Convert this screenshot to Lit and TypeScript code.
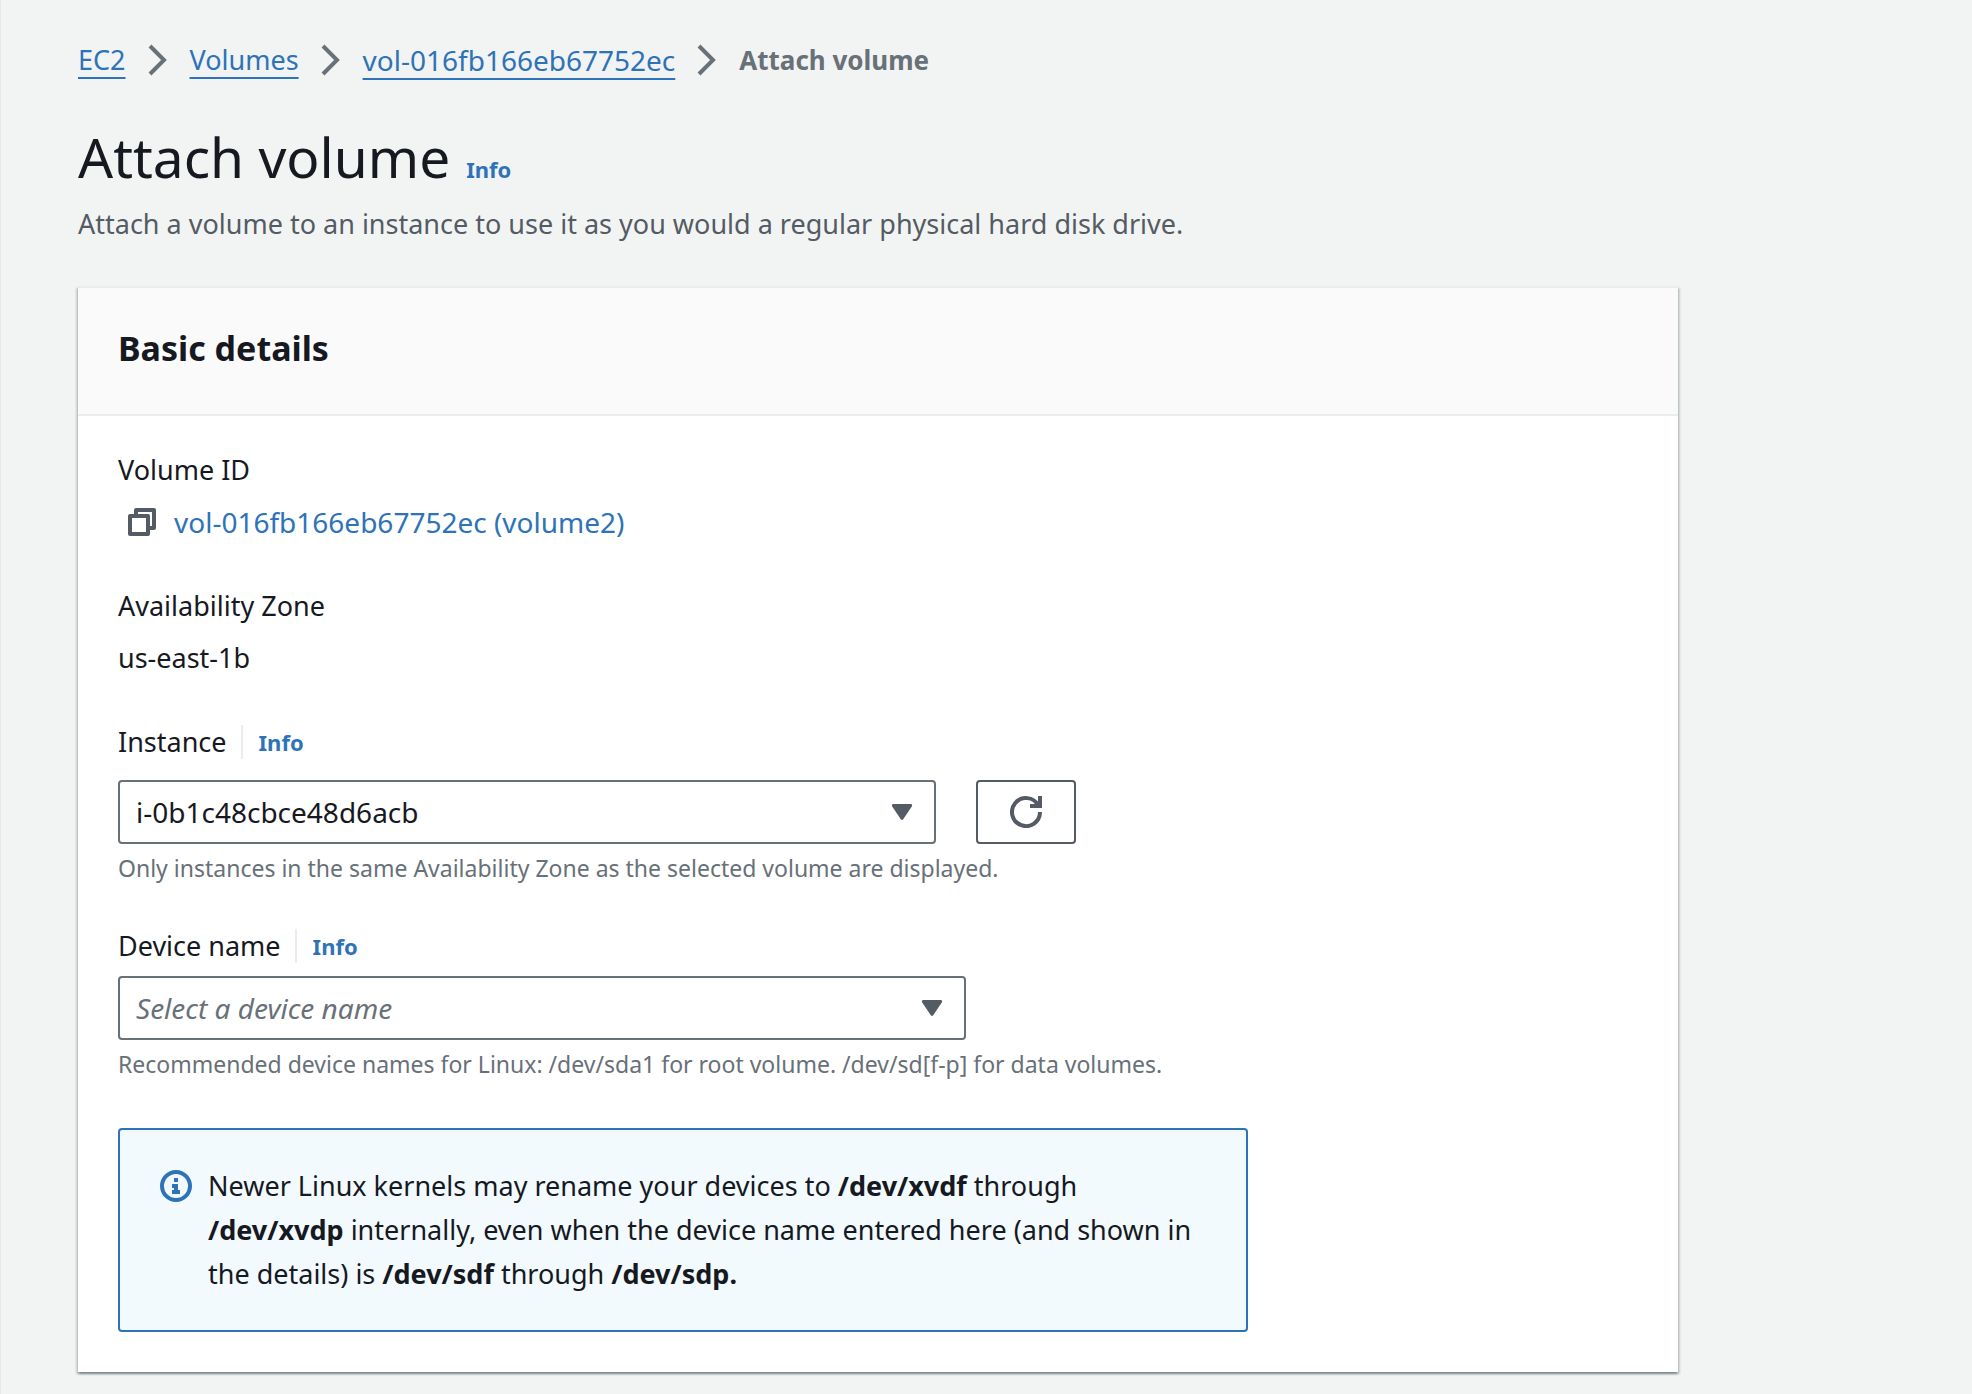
import { LitElement, html, css, svg, nothing } from "lit";
import { customElement, property } from "lit/decorators.js";

const icons = {
  chevron: svg`<path d="M4 1l7 7-7 7" />`,
  copy: svg`<g stroke-linejoin="round"><path d="M2 5h9v9H2z" /><path d="M5 5V2h9v9h-3" /></g>`,
  refresh: svg`<path d="M15 8a7 7 0 1 1-.9-3.4" /><path d="M10 5h5V0" />`,
  info: svg`<circle cx="8" cy="8" r="7" /><path class="solid" d="M7 4h2v2H7zM6 7h3v3h1v2H6v-2h1V9H6z" />`,
  caret: svg`<path class="solid" d="M3.6 4h8.8q1 .1.5 1.2L8.6 11.6q-.6.7-1.2 0L3.1 5.2Q2.6 4.1 3.6 4z" />`,
};

@customElement("ui-icon")
class UiIcon extends LitElement {
  @property() name: keyof typeof icons = "info";

  static styles = css`
    :host {
      display: block;
      flex: none;
      width: 32px;
      height: 32px;
    }
    .icon {
      display: block;
      width: 100%;
      height: 100%;
      fill: none;
      stroke: currentColor;
      stroke-width: 2;
    }
    .solid {
      fill: currentColor;
      stroke: none;
    }
  `;

  render() {
    return html`<svg class="icon" viewBox="0 0 16 16" aria-hidden="true">${icons[this.name]}</svg>`;
  }
}

interface SelectField {
  id: string;
  label: string;
  option: string;
  empty?: boolean;
  help: string;
  refreshable?: boolean;
}

const fields: SelectField[] = [
  {
    id: "instance",
    label: "Instance",
    option: "i-0b1c48cbce48d6acb",
    help: "Only instances in the same Availability Zone as the selected volume are displayed.",
    refreshable: true,
  },
  {
    id: "device",
    label: "Device name",
    option: "Select a device name",
    empty: true,
    help: "Recommended device names for Linux: /dev/sda1 for root volume. /dev/sd[f-p] for data volumes.",
  },
];

@customElement("app-root")
class AppRoot extends LitElement {
  static styles = css`
    :host {
      display: block;
      font-family: "Noto Sans", "Open Sans", sans-serif;
      font-size: 27px;
      line-height: 44px;
      color: #16191f;
    }
    * {
      box-sizing: border-box;
    }
    a {
      color: #2e73b8;
      text-decoration: none;
    }
    h1,
    h2,
    p,
    dl,
    dd,
    ol {
      margin: 0;
      padding: 0;
    }
    .page {
      min-height: 100vh;
      padding: 40px 77px 20px;
      background: #f2f4f3;
      border-left: 1px solid #e6e9e9;
    }
    .crumbs {
      display: flex;
      flex-wrap: wrap;
      line-height: 40px;
      list-style: none;
      margin-bottom: 40px;
    }
    .crumb {
      display: flex;
      align-items: center;
    }
    .crumb ui-icon {
      margin: 0 16px;
      color: #687078;
    }
    .crumb a {
      text-decoration: underline;
      text-decoration-thickness: 2px;
      text-underline-offset: 7px;
      text-decoration-skip-ink: none;
    }
    .current {
      font-size: 26px;
      font-weight: 700;
      color: #687078;
    }
    .id {
      font-size: 28px;
    }
    .title {
      display: flex;
      align-items: baseline;
      gap: 16px;
    }
    h1 {
      font-size: 55px;
      font-weight: 400;
      line-height: 74px;
    }
    .info {
      font-size: 22px;
      font-weight: 700;
      line-height: 34px;
    }
    .lead {
      margin: 10px 0 42px;
      line-height: 40px;
      color: #545b64;
    }
    .card {
      max-width: 1600px;
      background: #fff;
      border-top: 2px solid #eaeded;
      box-shadow:
        0 2px 2px rgba(0, 28, 36, 0.3),
        2px 2px 2px rgba(0, 28, 36, 0.15),
        -2px 2px 2px rgba(0, 28, 36, 0.15);
    }
    .head {
      padding: 38px 40px 44px;
      background: #fafafa;
      border-bottom: 2px solid #eaeded;
    }
    h2 {
      font-size: 34px;
      font-weight: 700;
    }
    .body {
      display: flex;
      flex-direction: column;
      gap: 40px;
      padding: 32px 40px 40px;
    }
    .details {
      display: flex;
      flex-direction: column;
      gap: 40px;
    }
    .detail {
      display: flex;
      flex-direction: column;
      gap: 8px;
    }
    .value {
      display: flex;
      align-items: center;
      gap: 8px;
    }
    button {
      display: flex;
      align-items: center;
      justify-content: center;
      color: #545b64;
      cursor: pointer;
    }
    .copy {
      padding: 0 8px;
      background: none;
      border: 0;
    }
    .label {
      display: flex;
      align-items: center;
      gap: 14px;
      margin-bottom: 8px;
    }
    .label.spaced {
      margin-bottom: 16px;
    }
    .label .info {
      padding-left: 16px;
      border-left: 2px solid #eaeded;
    }
    .controls {
      display: flex;
      gap: 40px;
    }
    .box {
      display: grid;
      align-items: center;
      flex: 1;
      max-width: 848px;
    }
    .box.narrow {
      max-width: 818px;
    }
    .box > * {
      grid-area: 1 / 1;
    }
    .box ui-icon {
      justify-self: end;
      margin-right: 18px;
      color: #545b64;
      pointer-events: none;
    }
    select {
      appearance: none;
      width: 100%;
      height: 64px;
      padding: 0 60px 0 16px;
      border: 2px solid #687078;
      border-radius: 4px;
      background: #fff;
      font: inherit;
      font-size: 28px;
      color: inherit;
    }
    select.empty {
      font-style: italic;
      color: #687078;
    }
    .refresh {
      width: 100px;
      height: 64px;
      padding: 0;
      border: 2px solid #545b64;
      border-radius: 4px;
      background: #fff;
    }
    .help {
      margin-top: 8px;
      font-size: 23px;
      line-height: 32px;
      color: #687078;
    }
    .alert {
      display: flex;
      gap: 16px;
      max-width: 1130px;
      margin-top: 8px;
      padding: 34px 40px;
      border: 2px solid #2e73b8;
      border-radius: 4px;
      background: #f2fafe;
    }
    .alert ui-icon {
      margin-top: 6px;
      color: #2e73b8;
    }
  `;

  private field(f: SelectField) {
    return html`
      <div>
        <div class="label ${f.refreshable ? "spaced" : ""}">
          <label for=${f.id}>${f.label}</label>
          <a class="info" href="#${f.id}-info">Info</a>
        </div>
        <div class="controls">
          <div class="box ${f.refreshable ? "narrow" : ""}">
            <select id=${f.id} class=${f.empty ? "empty" : ""} aria-describedby="${f.id}-help">
              <option>${f.option}</option>
            </select>
            <ui-icon name="caret"></ui-icon>
          </div>
          ${f.refreshable
            ? html`<button class="refresh" type="button" aria-label="Refresh"><ui-icon name="refresh"></ui-icon></button>`
            : nothing}
        </div>
        <p class="help" id="${f.id}-help">${f.help}</p>
      </div>
    `;
  }

  render() {
    const chevron = html`<ui-icon name="chevron"></ui-icon>`;
    return html`
      <main class="page">
        <nav aria-label="Breadcrumbs">
          <ol class="crumbs">
            <li class="crumb"><a href="#ec2">EC2</a>${chevron}</li>
            <li class="crumb"><a href="#volumes">Volumes</a>${chevron}</li>
            <li class="crumb"><a class="id" href="#volume">vol-016fb166eb67752ec</a>${chevron}</li>
            <li class="crumb current" aria-current="page">Attach volume</li>
          </ol>
        </nav>
        <div class="title">
          <h1>Attach volume</h1>
          <a class="info" href="#info">Info</a>
        </div>
        <p class="lead">Attach a volume to an instance to use it as you would a regular physical hard disk drive.</p>
        <section class="card">
          <header class="head"><h2>Basic details</h2></header>
          <div class="body">
            <dl class="details">
              <div class="detail">
                <dt>Volume ID</dt>
                <dd class="value">
                  <button class="copy" type="button" aria-label="Copy"><ui-icon name="copy"></ui-icon></button>
                  <a class="id" href="#volume">vol-016fb166eb67752ec (volume2)</a>
                </dd>
              </div>
              <div class="detail">
                <dt>Availability Zone</dt>
                <dd>us-east-1b</dd>
              </div>
            </dl>
            ${fields.map((f) => this.field(f))}
            <div class="alert">
              <ui-icon name="info"></ui-icon>
              <p>
                Newer Linux kernels may rename your devices to <b>/dev/xvdf</b> through <b>/dev/xvdp</b> internally,
                even when the device name entered here (and shown in the details) is <b>/dev/sdf</b> through
                <b>/dev/sdp.</b>
              </p>
            </div>
          </div>
        </section>
      </main>
    `;
  }
}
